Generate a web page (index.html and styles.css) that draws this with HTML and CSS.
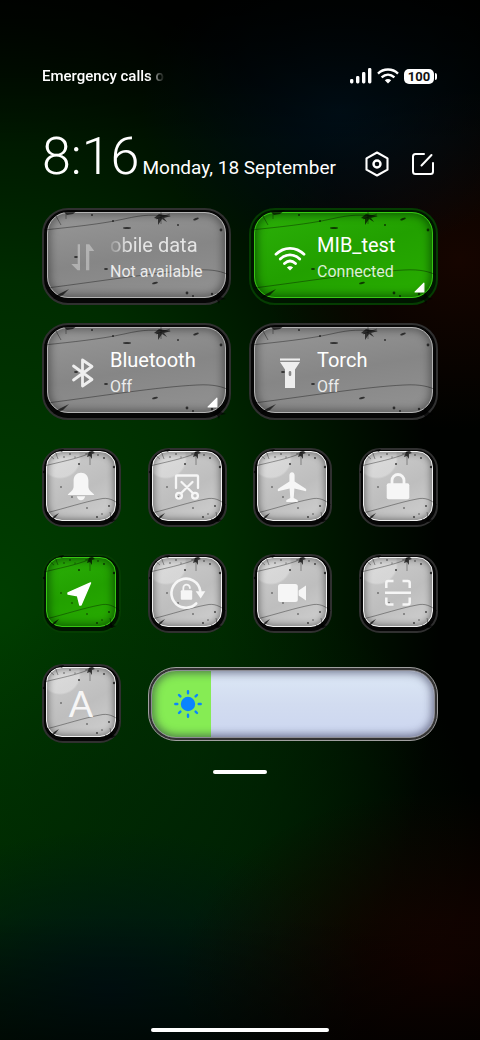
FILE: index.html
```
<!DOCTYPE html>
<html lang="en">
<head>
    <meta charset="UTF-8">
    <meta name="viewport" content="width=device-width, initial-scale=1">
    <title>Control centre</title>
    <link rel="stylesheet" href="styles.css">
</head>
<body>
    <!-- shared scratch textures -->
    <svg width="0" height="0" class="defs" aria-hidden="true">
        <symbol id="scratch-wide" viewBox="0 0 189 97" preserveAspectRatio="none">
            <g fill="none" stroke="#000" stroke-opacity=".45" stroke-width=".8">
                <path d="M2 22C30 19 60 16 82 11S110 7 128 8"/>
                <path d="M5 80C60 73 115 64 155 62C172 61 181 64 187 67"/>
                <path d="M14 8l5 9M24 5v6M119 4v12M114 11l14-5"/>
            </g>
            <g fill="#000" fill-opacity=".65">
                <path d="M22 4l14-2-5 4-6 1zM15 87l12-6-6 6-10 4zM176 84l3 5 5 2-6 1-1 4-2-4-6-1 5-2zM117 6l5 1 7 1-7 2 3 4-5-3-4 6v-6l-4-1z"/>
                <ellipse cx="85" cy="20" rx="4" ry="1"/>
                <ellipse cx="113" cy="75" rx="3" ry="1" transform="rotate(-15 113 75)"/>
                <ellipse cx="64" cy="61" rx="2" ry="1"/>
                <ellipse cx="34" cy="49" rx="2" ry="1"/>
                <ellipse cx="154" cy="11" rx="3" ry="1" transform="rotate(-20 154 11)"/>
                <circle cx="179" cy="22" r="1.4"/>
                <circle cx="136" cy="17" r="1"/>
                <circle cx="71" cy="13" r="1"/>
                <circle cx="145" cy="85" r="1.4"/>
                <circle cx="151" cy="88" r="1"/>
                <circle cx="170" cy="86" r="1.2"/>
                <circle cx="50" cy="7" r="1"/>
            </g>
        </symbol>
        <symbol id="scratch-small" viewBox="0 0 79 79">
            <g fill="none" stroke="#000" stroke-opacity=".5" stroke-width=".7">
                <path d="M2 18C18 14 34 11 46 6"/>
                <path d="M4 65C24 60 42 54 58 51C66 49 72 52 78 57"/>
                <path d="M7 7l5 4M13 3l3 8M48 3v14M43 6l9-3M68 64l2 10M62 73l10-5"/>
            </g>
            <g fill="#000" fill-opacity=".7">
                <path d="M12 68l5-3-4 5-4 2zM16 2l6-1-2 3zM47 4l3-1 3 2-3 1v5l-2-3-3 1 1-3zM69 67l1 4 4 1-4 2-3-1z"/>
                <circle cx="37" cy="16" r="1"/>
                <circle cx="19" cy="39" r=".8"/>
                <circle cx="30" cy="49" r=".8"/>
                <circle cx="45" cy="60" r=".8"/>
                <circle cx="72" cy="19" r="1.2"/>
                <circle cx="62" cy="10" r=".9"/>
                <circle cx="56" cy="7" r=".8"/>
                <circle cx="28" cy="6" r=".8"/>
                <circle cx="33" cy="9" r=".6"/>
                <circle cx="22" cy="9" r=".7"/>
                <circle cx="55" cy="69" r=".9"/>
                <circle cx="60" cy="66" r=".7"/>
                <circle cx="64" cy="72" r="1"/>
                <circle cx="67" cy="58" r=".9"/>
                <circle cx="2" cy="24" r="1.2"/>
            </g>
        </symbol>
    </svg>

    <div class="status-bar">
        <span class="carrier">Emergency calls o</span>
        <div class="status-icons">
            <svg width="22" height="16" viewBox="0 0 22 16" fill="#fff">
                <rect x="0" y="11" width="3.4" height="4.5" rx="1.4"/>
                <rect x="6" y="8" width="3.4" height="7.5" rx="1.4"/>
                <rect x="12" y="4" width="3.4" height="11.5" rx="1.4"/>
                <rect x="18" y="0" width="3.4" height="15.5" rx="1.4"/>
            </svg>
            <svg width="22" height="16" viewBox="0 0 22 16" fill="none" stroke="#fff" stroke-width="2.4">
                <path d="M1 5.6C6.5 .2 15.5 .2 21 5.6M4.600 9.3C8.5 5.8 13.5 5.8 17.4 9.3"/>
                <path d="M11 15.5L7.8 12.2C9.7 10.7 12.3 10.7 14.2 12.2Z" fill="#fff" stroke="none"/>
            </svg>
            <span class="battery">100</span>
        </div>
    </div>

    <header class="header">
        <span class="clock">8:16</span>
        <span class="date">Monday, 18 September</span>
        <button class="header-button" aria-label="Settings">
            <svg width="26" height="26" viewBox="0 0 26 26" fill="none" stroke="#fff" stroke-width="2.1" stroke-linejoin="round">
                <path d="M13 1.5L23.5 7.3V18.7L13 24.5L2.5 18.7V7.3Z"/>
                <circle cx="13" cy="13" r="3.5" stroke-width="2.4"/>
            </svg>
        </button>
        <button class="header-button" aria-label="Edit">
            <svg width="26" height="26" viewBox="0 0 26 26" fill="none" stroke="#fff" stroke-width="2" stroke-linecap="round">
                <path d="M14 3H5.5Q3 3 3 5.5V20.5Q3 23 5.5 23H20.500Q23 23 23 20.5V12"/>
                <path d="M11.5 14.5L21.5 4"/>
            </svg>
        </button>
    </header>

    <main class="panel">
        <div class="wide-tiles">
            <button class="tile wide">
                <span class="face">
                    <svg class="icon dim" viewBox="0 0 36 36" fill="#fff">
                        <path d="M12.7 4.3H15V30.3H12.5L6.3 24H12.7ZM21 30.3V4.3H24.3L29.3 11H24.3V30.3Z"/>
                    </svg>
                    <span class="label">
                        <span class="title scrolling">obile data</span>
                        <span class="state">Not available</span>
                    </span>
                </span>
                <svg class="scratches"><use href="#scratch-wide"/></svg>
            </button>
            <button class="tile wide active">
                <span class="face">
                    <svg class="icon" viewBox="0 0 36 36" fill="none" stroke="#fff" stroke-width="2.8" stroke-linecap="round">
                        <path d="M4 14.3C12 6.3 24 6.3 32 14.3M8.3 19C14 13.5 22 13.5 27.7 19M12.5 23.5C16 20.3 20 20.3 23.5 23.5"/>
                        <path d="M18 30.5L14.9 27.6C16.5 25.8 19.5 25.8 21.1 27.6Z" fill="#fff" stroke="none"/>
                    </svg>
                    <span class="label">
                        <span class="title">MIB_test</span>
                        <span class="state">Connected</span>
                    </span>
                </span>
                <svg class="scratches"><use href="#scratch-wide"/></svg>
                <svg class="corner" viewBox="0 0 10 10"><path d="M9 1V9H1Z"/></svg>
            </button>
            <button class="tile wide">
                <span class="face">
                    <svg class="icon" viewBox="0 0 36 36" fill="none" stroke="#eee" stroke-width="2.8" stroke-linecap="round" stroke-linejoin="round">
                        <path d="M8.5 11L27 24.5L17.5 31V5L27 11.5L8.5 25"/>
                    </svg>
                    <span class="label">
                        <span class="title">Bluetooth</span>
                        <span class="state">Off</span>
                    </span>
                </span>
                <svg class="scratches"><use href="#scratch-wide"/></svg>
                <svg class="corner" viewBox="0 0 10 10"><path d="M9 1V9H1Z"/></svg>
            </button>
            <button class="tile wide">
                <span class="face">
                    <svg class="icon" viewBox="0 0 36 36" fill="#eee">
                        <path d="M8 3.5H28V5.6H8Z"/>
                        <path fill-rule="evenodd" d="M8 7H28L23 14.5V33H13V14.5ZM18 16A1.3 1.3 0 0 0 16.7 17.3V19.7A1.3 1.3 0 0 0 19.3 19.7V17.3A1.3 1.3 0 0 0 18 16Z"/>
                    </svg>
                    <span class="label">
                        <span class="title">Torch</span>
                        <span class="state">Off</span>
                    </span>
                </span>
                <svg class="scratches"><use href="#scratch-wide"/></svg>
            </button>
        </div>

        <div class="small-tiles">
            <button class="tile small" aria-label="Sound">
                <span class="face">
                    <svg class="icon" viewBox="0 0 32 32" fill="#f6f6f6">
                        <path d="M16 1.7C11.5 1.7 8.6 5 8.6 9.5V15.5C8.6 19 5.5 21 3 23.2Q2.5 24 3.5 24H28.5Q29.5 24 29 23.2C26.5 21 23.4 19 23.4 15.5V9.5C23.4 5 20.5 1.7 16 1.7ZM11.8 25.3H20.2C19.6 27.8 18 29.3 16 29.3S12.4 27.8 11.8 25.3Z"/>
                    </svg>
                </span>
                <svg class="scratches"><use href="#scratch-small"/></svg>
            </button>
            <button class="tile small" aria-label="Screenshot">
                <span class="face">
                    <svg class="icon" viewBox="0 0 32 32" fill="none" stroke="#f6f6f6" stroke-width="2.3" stroke-linecap="round" stroke-linejoin="round">
                        <path d="M5 17V5.5Q5 4.5 6 4.5H26Q27 4.5 27 5.5V17M10.5 11L22 22.3M21.5 11L10 22.3"/>
                        <circle cx="8" cy="24.8" r="2.9"/>
                        <circle cx="24" cy="24.8" r="2.9"/>
                    </svg>
                </span>
                <svg class="scratches"><use href="#scratch-small"/></svg>
            </button>
            <button class="tile small" aria-label="Flight mode">
                <span class="face">
                    <svg class="icon" viewBox="0 0 32 32" fill="#f6f6f6">
                        <path d="M16 1.3C14.3 1.3 13.4 2.8 13.4 4.5V10.5L2.2 17.7Q1.3 18.5 2 20.2L13.6 17.5L14.3 27L10.5 29Q9.8 30 10.5 31H21.5Q22.2 30 21.5 29L17.7 27L18.4 17.5L30 20.2Q30.7 18.5 29.8 17.7L18.6 10.5V4.5C18.6 2.8 17.7 1.3 16 1.3Z"/>
                    </svg>
                </span>
                <svg class="scratches"><use href="#scratch-small"/></svg>
            </button>
            <button class="tile small" aria-label="Lock screen">
                <span class="face">
                    <svg class="icon" viewBox="0 0 32 32">
                        <rect x="4.7" y="12.3" width="22.6" height="16" rx="2" fill="#f6f6f6"/>
                        <path d="M10 13V9.5A6 6 0 0 1 22 9.5V13" fill="none" stroke="#f6f6f6" stroke-width="2.8"/>
                    </svg>
                </span>
                <svg class="scratches"><use href="#scratch-small"/></svg>
            </button>
            <button class="tile small active" aria-label="Location">
                <span class="face">
                    <svg class="icon" viewBox="0 0 32 32" fill="#fff" stroke="#fff" stroke-width="1.4" stroke-linejoin="round">
                        <path d="M25.500 6L3 15.8V17L12.5 18.8L14.800 28H16Z"/>
                    </svg>
                </span>
                <svg class="scratches"><use href="#scratch-small"/></svg>
            </button>
            <button class="tile small" aria-label="Rotation lock">
                <span class="face">
                    <svg class="icon" viewBox="0 0 32 32">
                        <path d="M25.2 26.5A14.5 14.5 0 1 1 29.3 14" fill="none" stroke="#f6f6f6" stroke-width="2.6" stroke-linecap="round"/>
                        <path d="M24.7 14.2H34.3L29.7 21.5Z" fill="#f6f6f6"/>
                        <rect x="9.8" y="13.3" width="11.4" height="9.5" rx="1" fill="#f6f6f6"/>
                        <path d="M12.3 13.5V11A3.3 3.3 0 0 1 18.9 11" fill="none" stroke="#f6f6f6" stroke-width="1.8" stroke-linecap="round"/>
                    </svg>
                </span>
                <svg class="scratches"><use href="#scratch-small"/></svg>
            </button>
            <button class="tile small" aria-label="Screen recorder">
                <span class="face">
                    <svg class="icon" viewBox="0 0 32 32" fill="#f6f6f6">
                        <rect x="2" y="7" width="19.8" height="18" rx="2.5"/>
                        <path d="M22.6 13.5L30 8.5V23.5L22.6 18.5Z"/>
                    </svg>
                </span>
                <svg class="scratches"><use href="#scratch-small"/></svg>
            </button>
            <button class="tile small" aria-label="Scanner">
                <span class="face">
                    <svg class="icon" viewBox="0 0 32 32" fill="none" stroke="#f6f6f6" stroke-width="2.5">
                        <path d="M4.3 11V6Q4.3 4 6.3 4H11.5M20.5 4H25.7Q27.7 4 27.7 6V11M27.7 20.5V25.5Q27.7 27.5 25.7 27.5H20.5M11.5 27.5H6.3Q4.3 27.5 4.3 25.5V20.5M3 15.8H29"/>
                    </svg>
                </span>
                <svg class="scratches"><use href="#scratch-small"/></svg>
            </button>
        </div>

        <div class="brightness-row">
            <button class="tile small" aria-label="Auto brightness">
                <span class="face"><span class="letter">A</span></span>
                <svg class="scratches"><use href="#scratch-small"/></svg>
            </button>
            <div class="brightness">
                <input type="range" min="0" max="100" value="22" aria-label="Brightness">
                <svg class="sun" viewBox="0 0 30 30" fill="#0a84ff" stroke="#0a84ff" stroke-width="2.4" stroke-linecap="round">
                    <circle cx="15" cy="15" r="6"/>
                    <path d="M15 2.3V4.3M15 25.7V27.7M2.3 15H4.3M25.7 15H27.7M6 6L7.4 7.4M22.6 22.6L24 24M24 6L22.6 7.4M7.4 22.6L6 24"/>
                </svg>
            </div>
        </div>
        <div class="handle"></div>
    </main>

    <div class="home-bar"></div>
</body>
</html>
```
FILE: styles.css
```
* {
    box-sizing: border-box;
}

body {
    margin: 0;
    min-height: 100vh;
    padding: 66px 42px 8px;
    display: flex;
    flex-direction: column;
    font-family: Roboto, sans-serif;
    color: #fff;
    background:
        linear-gradient(180deg, rgba(0, 0, 0, .7), transparent 14%, transparent 88%, rgba(0, 0, 0, .6)),
        radial-gradient(ellipse 200px 150px at 340px 110px, rgba(0, 18, 30, .8), transparent),
        radial-gradient(ellipse 200px 170px at 460px 260px, #160500, transparent),
        radial-gradient(ellipse 260px 180px at 440px 970px, #160300, transparent),
        radial-gradient(ellipse 260px 160px at 110px 990px, #001416, transparent),
        radial-gradient(ellipse 300px 260px at 180px 840px, rgba(0, 36, 4, .8), transparent),
        radial-gradient(ellipse 440px 640px at 0 600px, #003e00, #002c00 50%, transparent),
        #000200;
}

button {
    margin: 0;
    padding: 0;
    border: 0;
    background: none;
    color: inherit;
    font-family: inherit;
    text-align: left;
}

svg {
    display: block;
}

.defs {
    position: absolute;
}

/* status bar */
.status-bar {
    display: flex;
    justify-content: space-between;
    align-items: center;
    height: 20px;
}

.carrier {
    width: 123px;
    overflow: hidden;
    white-space: nowrap;
    font-size: 15px;
    font-weight: 500;
    -webkit-mask-image: linear-gradient(90deg, #000 86%, transparent);
    mask-image: linear-gradient(90deg, #000 86%, transparent);
}

.status-icons {
    display: flex;
    align-items: center;
    gap: 5px;
    padding-right: 4px;
}

.battery {
    position: relative;
    width: 30px;
    height: 15px;
    border-radius: 5px;
    background: #fff;
    color: #111;
    font-size: 13px;
    line-height: 15px;
    font-weight: 700;
    text-align: center;
}

.battery::after {
    content: "";
    position: absolute;
    left: 31px;
    top: 4px;
    width: 2px;
    height: 7px;
    border-radius: 0 2px 2px 0;
    background: #fff;
}

/* clock and date */
.header {
    display: flex;
    align-items: baseline;
    margin-top: 37px;
    padding-right: 2px;
    height: 85px;
}

.clock {
    margin-right: 3px;
    font-size: 52px;
    line-height: 68px;
    font-weight: 300;
}

.date {
    flex: 1;
    font-size: 19px;
    white-space: nowrap;
}

.header-button {
    align-self: flex-start;
    margin-top: 28px;
    margin-left: 20px;
}

/* tiles */
.wide-tiles {
    display: grid;
    grid-template-columns: 1fr 1fr;
    gap: 18px;
}

.small-tiles {
    display: grid;
    grid-template-columns: repeat(4, 79px);
    justify-content: space-between;
    row-gap: 27px;
    margin-top: 28px;
}

.tile {
    position: relative;
    display: flex;
    border: 2px solid #303030;
    background: #060606;
}

.face {
    flex: 1;
    display: flex;
    align-items: center;
    border: 1px solid #d0d0d0;
}

.tile.wide {
    height: 97px;
    padding: 2px 3px 5px;
    border-radius: 26px;
}

.wide .face {
    padding-top: 5px;
    padding-left: 17px;
    border-color: #b4b4b4;
    border-radius: 21px;
    background: linear-gradient(170deg, #989898, #868686 50%, #929292);
    box-shadow: inset 0 0 8px 2px rgba(0, 0, 0, .4);
}

.tile.small {
    width: 79px;
    height: 79px;
    padding: 1px 3px 4px 2px;
    border-radius: 21px;
}

.small .face {
    justify-content: center;
    padding-top: 2px;
    border-color: #f0f0f0;
    border-radius: 16px;
    background:
        radial-gradient(circle at 13px 6px, rgba(255, 255, 255, .3) 19px, transparent 21px),
        linear-gradient(150deg, #cdcdcd, #bebebe 55%, #d0d0d0);
    box-shadow: inset 0 0 7px 1px rgba(0, 0, 0, .45);
}

.tile.active {
    border-color: #053d02;
    background: #001500;
}

.active .face {
    border-color: #37c514;
    background: linear-gradient(160deg, #2bb008, #22a000 50%, #28ad00);
    box-shadow: inset 0 0 8px 2px rgba(0, 50, 0, .65);
}

.scratches {
    position: absolute;
    top: -2px;
    left: -2px;
    width: calc(100% + 4px);
    height: calc(100% + 4px);
    pointer-events: none;
}

/* keep the contents above the scratches */
.icon,
.label,
.letter {
    position: relative;
    z-index: 1;
}

.icon {
    width: 32px;
    height: 32px;
    overflow: visible;
}

.wide .icon {
    width: 36px;
    height: 36px;
    margin-right: 9px;
}

.dim {
    opacity: .35;
}

.label {
    display: flex;
    flex-direction: column;
}

.title {
    font-size: 20px;
    line-height: 28px;
}

.scrolling {
    color: #e4e4e4;
    -webkit-mask-image: linear-gradient(90deg, transparent -4px, #000 18px);
    mask-image: linear-gradient(90deg, transparent -4px, #000 18px);
}

.state {
    font-size: 16px;
    line-height: 26px;
    color: rgba(255, 255, 255, .85);
}

.corner {
    position: absolute;
    right: 11px;
    bottom: 10px;
    width: 11px;
    height: 11px;
    fill: #fff;
    stroke: #fff;
    stroke-linejoin: round;
}

.letter {
    font-family: Lato, sans-serif;
    font-size: 36px;
    line-height: 40px;
    color: #f6f6f6;
}

/* brightness */
.brightness-row {
    display: flex;
    align-items: center;
    gap: 27px;
    margin-top: 31px;
}

.brightness {
    position: relative;
    flex: 1;
    height: 74px;
    padding: 2px;
    border: 1px solid #a0a0a0;
    border-radius: 28px;
    background: #333;
}

.brightness input {
    display: block;
    width: 100%;
    height: 100%;
    margin: 0;
    -webkit-appearance: none;
    appearance: none;
    border: 1px solid #8c8c94;
    border-radius: 25px;
    background:
        linear-gradient(90deg, #86ec54 21%, transparent 21%),
        linear-gradient(180deg, #dce8f6, #d2dcf0 50%, #ccd6f0);
    box-shadow: inset 0 0 9px 2px rgba(30, 30, 60, .55);
}

.brightness input::-webkit-slider-thumb {
    -webkit-appearance: none;
    width: 2px;
    height: 60px;
    background: transparent;
}

.sun {
    position: absolute;
    top: 21px;
    left: 24px;
    width: 30px;
    height: 30px;
    pointer-events: none;
}

.handle {
    width: 54px;
    height: 4px;
    margin: 27px auto 0;
    border-radius: 2px;
    background: #fff;
}

.home-bar {
    width: 178px;
    height: 4px;
    margin: auto auto 0;
    border-radius: 2px;
    background: #fff;
}
```
